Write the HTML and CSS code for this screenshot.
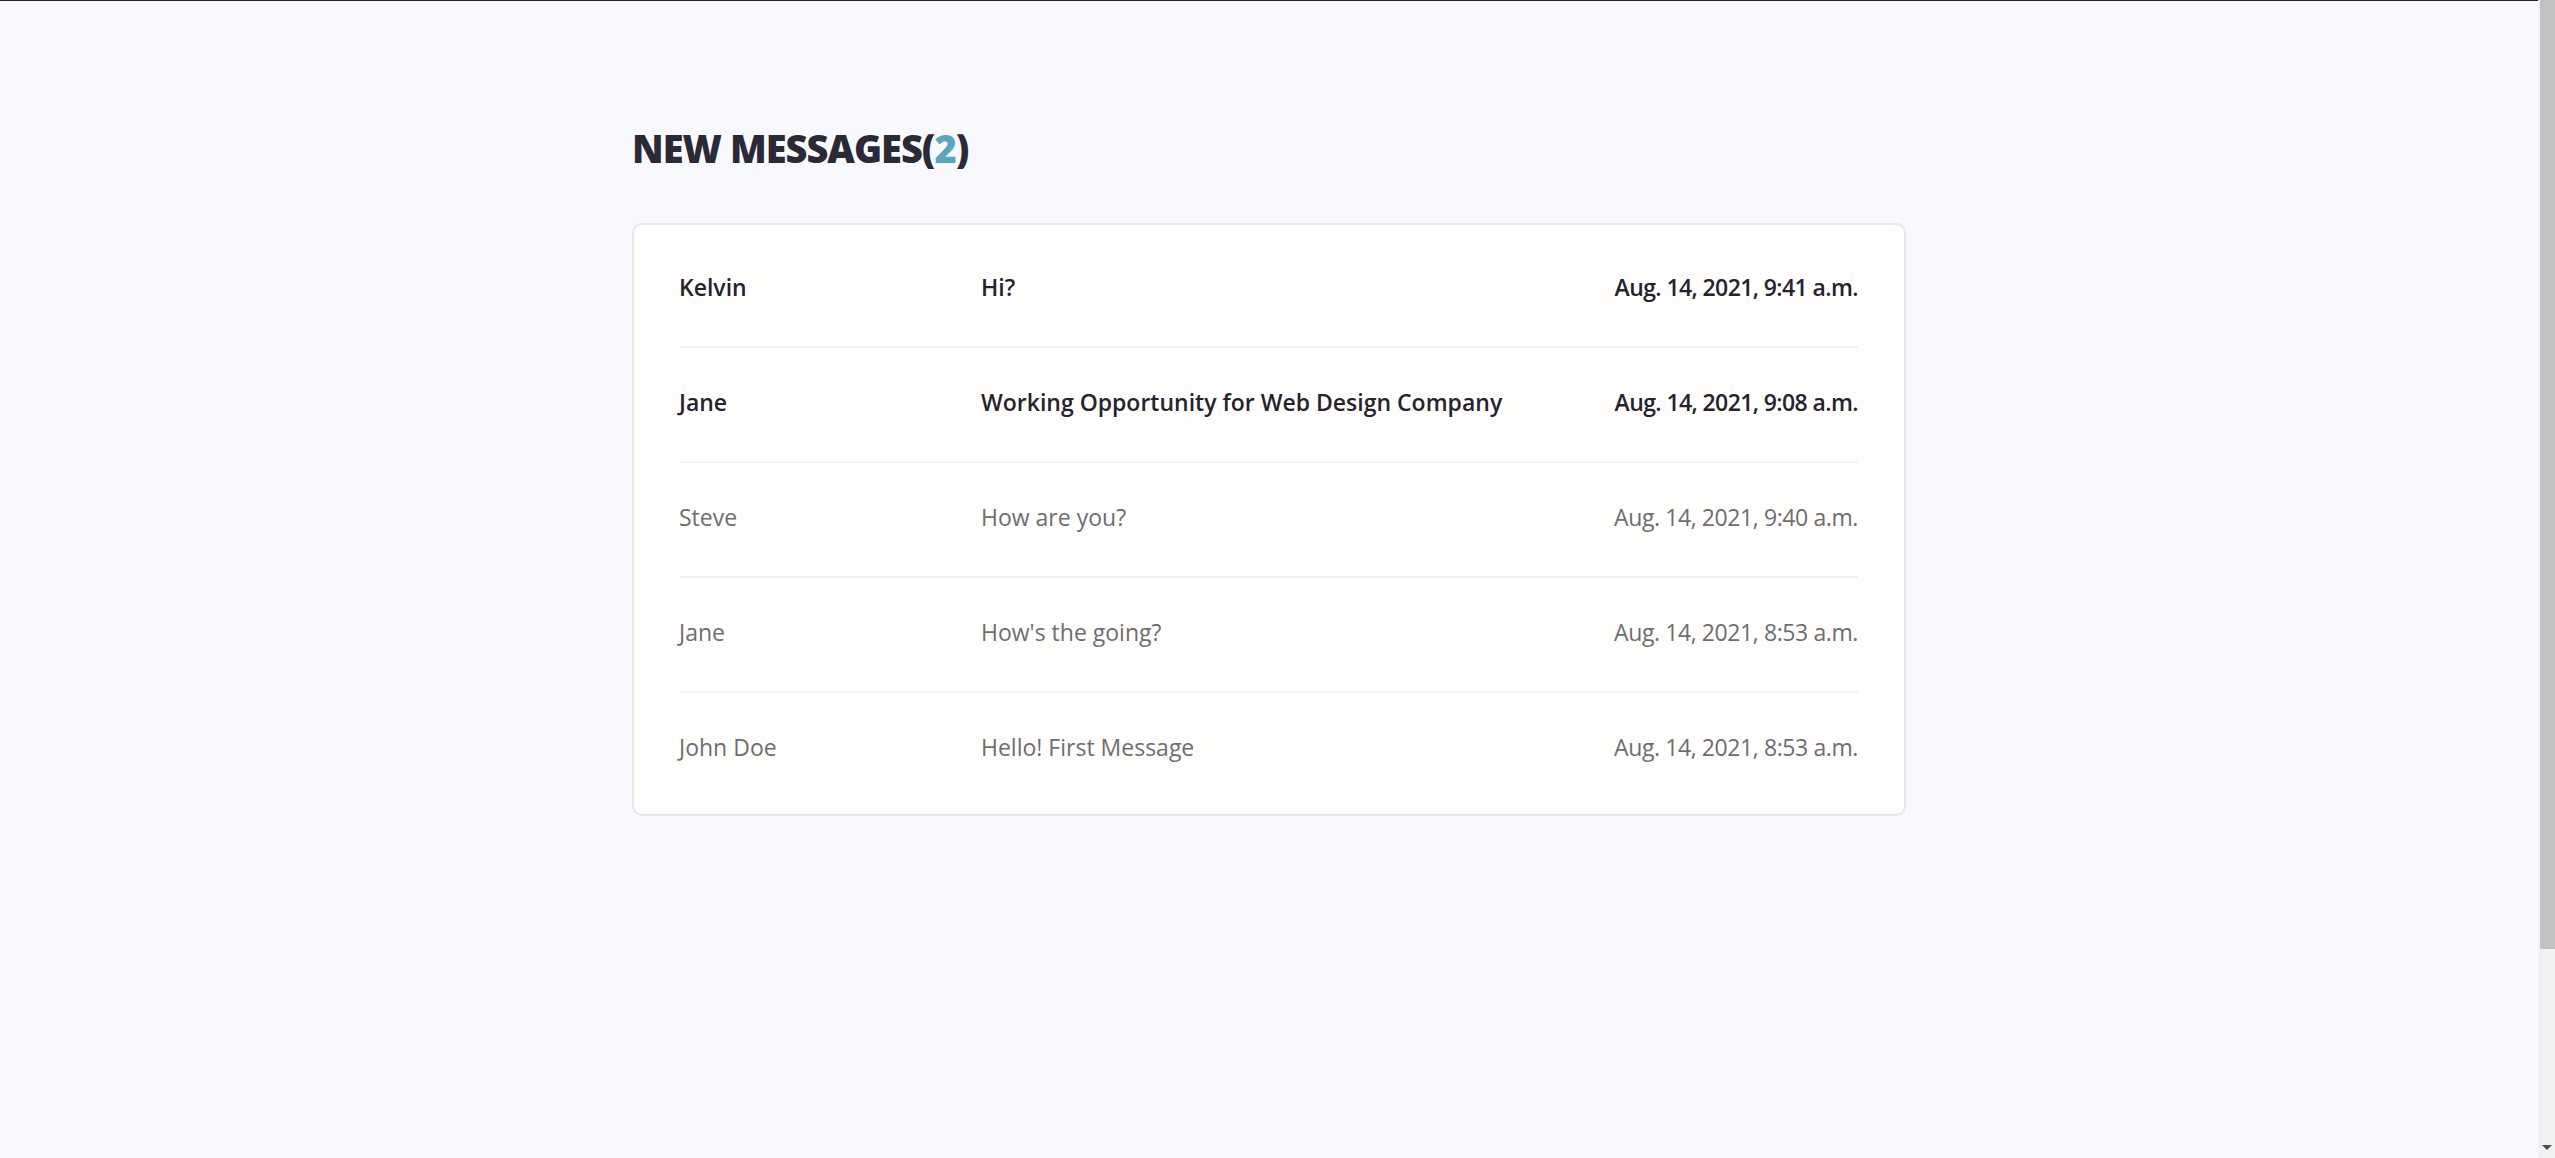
FILE: index.html
```html
<!DOCTYPE html>
<html lang="en">
<head>
<meta charset="utf-8">
<title>New Messages</title>
<link rel="stylesheet" href="styles.css">
</head>
<body>
<div class="viewport">
  <div class="topbar"></div>
  <main class="page">
    <h1 class="title">NEW MESSAGES(<span class="count">2</span>)</h1>
    <section class="card">
      <div class="row unread">
        <div class="sender">Kelvin</div>
        <div class="subject">Hi?</div>
        <div class="date">Aug. 14, 2021, 9:41 a.m.</div>
      </div>
      <div class="row unread">
        <div class="sender">Jane</div>
        <div class="subject">Working Opportunity for Web Design Company</div>
        <div class="date">Aug. 14, 2021, 9:08 a.m.</div>
      </div>
      <div class="row">
        <div class="sender">Steve</div>
        <div class="subject">How are you?</div>
        <div class="date">Aug. 14, 2021, 9:40 a.m.</div>
      </div>
      <div class="row">
        <div class="sender">Jane</div>
        <div class="subject">How's the going?</div>
        <div class="date">Aug. 14, 2021, 8:53 a.m.</div>
      </div>
      <div class="row">
        <div class="sender">John Doe</div>
        <div class="subject">Hello! First Message</div>
        <div class="date">Aug. 14, 2021, 8:53 a.m.</div>
      </div>
    </section>
  </main>
</div>
<div class="scrollbar" aria-hidden="true">
  <div class="scroll-thumb"></div>
  <div class="scroll-arrow"></div>
</div>
</body>
</html>
```
FILE: styles.css
```css
html, body {
  margin: 0;
  padding: 0;
}
body {
  background: #f8f9fd;
  font-family: "Open Sans", "Noto Sans", sans-serif;
  color: #25232e;
}
.viewport {
  margin-right: 17px;
}
.topbar {
  height: 1px;
  background: #23232d;
}
.page {
  width: 1274px;
  margin: 0 auto;
  padding-top: 128px;
  padding-bottom: 120px;
}
.title {
  margin: 0 0 56px;
  font-size: 38px;
  line-height: 38px;
  font-weight: 800;
  letter-spacing: -1px;
  color: #2a2935;
}
.count {
  color: #5aa5bf;
}
.card {
  background: #fffefd;
  border: 2px solid #e6e7eb;
  border-radius: 10px;
  padding: 8px 46px 8px 45px;
}
.row {
  display: grid;
  grid-template-columns: 302px 1fr auto;
  align-items: center;
  box-sizing: border-box;
  height: 115px;
  padding-bottom: 6px;
  border-bottom: 2px solid #f2f2f2;
  font-size: 23px;
  color: #6e6d6f;
}
.row:last-child {
  height: 113px;
  border-bottom: none;
}
.row.unread {
  font-weight: 600;
  color: #25232e;
}
.date {
  text-align: right;
  letter-spacing: -0.4px;
}
.unread .date {
  letter-spacing: -0.6px;
}
.scrollbar {
  position: fixed;
  top: 0;
  right: 0;
  width: 17px;
  height: 100vh;
  background: #f1f1f1;
}
.scroll-thumb {
  position: absolute;
  top: 0;
  left: 2px;
  right: 0;
  height: 949px;
  background: #c1c1c1;
}
.scroll-arrow {
  position: absolute;
  bottom: 8px;
  left: 4px;
  width: 0;
  height: 0;
  border-left: 5px solid transparent;
  border-right: 5px solid transparent;
  border-top: 5px solid #505050;
}
```
